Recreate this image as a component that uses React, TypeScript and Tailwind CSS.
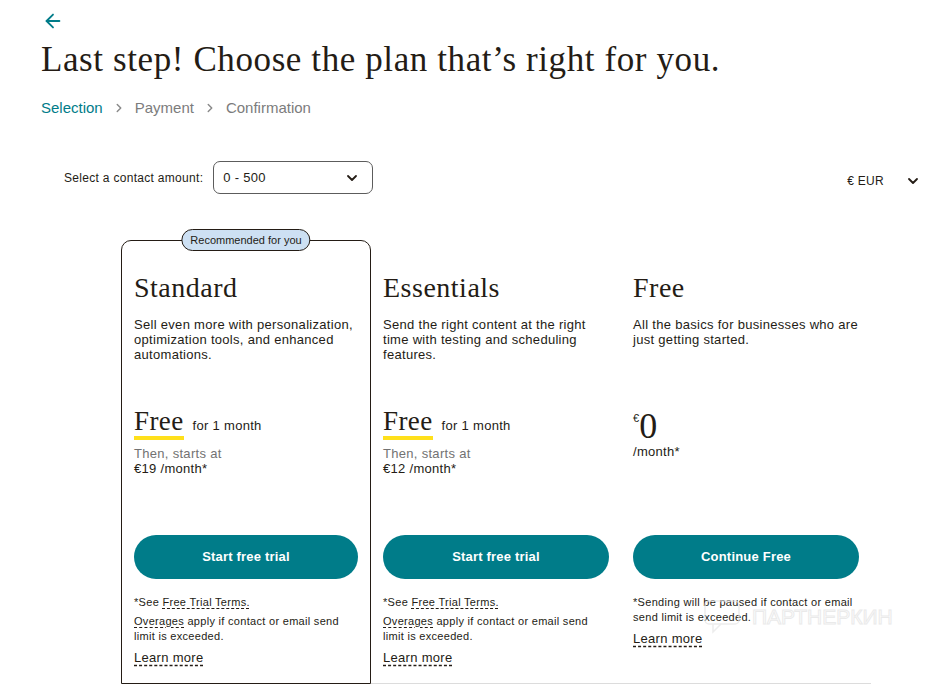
import React from "react";
import { ArrowLeft, ChevronDown, ChevronRight } from "lucide-react";

const sans = "font-['Liberation_Sans',Arial,sans-serif]";
const serif = "font-['Liberation_Serif','Times_New_Roman',serif]";

type Plan = {
  name: string;
  desc: string;
  trial: boolean;
  price: string;
  cta: string;
  recommended?: boolean;
};

const plans: Plan[] = [
  {
    name: "Standard",
    desc: "Sell even more with personalization, optimization tools, and enhanced automations.",
    trial: true,
    price: "€19",
    cta: "Start free trial",
    recommended: true,
  },
  {
    name: "Essentials",
    desc: "Send the right content at the right time with testing and scheduling features.",
    trial: true,
    price: "€12",
    cta: "Start free trial",
  },
  {
    name: "Free",
    desc: "All the basics for businesses who are just getting started.",
    trial: false,
    price: "0",
    cta: "Continue Free",
  },
];

function PlanColumn({ plan }: { plan: Plan }) {
  const box = plan.recommended
    ? "relative border border-[#241c15] rounded-t-[10px] px-[12px]"
    : "relative border-b border-[#dcdcdc] px-[12px] pt-[1px]";

  return (
    <div className={box}>
      {plan.recommended && (
        <div className="absolute left-1/2 -translate-x-1/2 -top-[12px] rounded-full border border-[#241c15] bg-[#cde0f3] px-[8px] h-[22px] flex items-center text-[11px] text-[#241c15] whitespace-nowrap">
          Recommended for you
        </div>
      )}

      <h2 className={`${serif} text-[28px] leading-[32px] tracking-[0.5px] text-[#241c15] pt-[31px]`}>{plan.name}</h2>
      <p className="mt-[13px] h-[90px] text-[13px] leading-[15px] tracking-[0.3px] text-[#241c15]">{plan.desc}</p>

      {plan.trial ? (
        <div className="h-[71px]">
          <div className="flex items-baseline gap-[9px]">
            <div className="flex flex-col">
              <span className={`${serif} text-[27px] leading-[28px] tracking-[0.4px] text-[#241c15]`}>Free</span>
              <span className="mt-[1px] h-[4px] bg-[#ffe01b]" />
            </div>
            <span className="text-[13px] tracking-[0.3px] text-[#241c15]">for 1 month</span>
          </div>
          <p className="mt-[6px] text-[13px] leading-[15px] tracking-[0.3px] text-[#727272]">Then, starts at</p>
          <p className="text-[13px] leading-[15px] tracking-[0.3px] text-[#241c15]">
            {plan.price} <span>/month*</span>
          </p>
        </div>
      ) : (
        <div className="h-[71px] pt-[2px]">
          <div className="flex items-start text-[#241c15]">
            <span className="text-[11px] leading-[11px] mt-[4px]">€</span>
            <span className={`${serif} text-[36px] leading-[34px]`}>{plan.price}</span>
          </div>
          <p className="mt-[1px] text-[13px] leading-[15px] tracking-[0.3px] text-[#241c15]">/month*</p>
        </div>
      )}

      <button className="mt-[57px] w-full h-[44px] rounded-full bg-[#007c89] text-white text-[13px] tracking-[0.2px] font-bold">
        {plan.cta}
      </button>

      {plan.trial ? (
        <div className="mt-[16px] text-[11px] leading-[15px] tracking-[0.3px] text-[#241c15]">
          <p className="mb-[4px]">
            *See <span className="underline decoration-dashed underline-offset-2">Free Trial Terms.</span>
          </p>
          <p>
            <span className="underline decoration-dashed underline-offset-2">Overages</span> apply if contact or email send limit is exceeded.
          </p>
        </div>
      ) : (
        <div className="mt-[16px] text-[11px] leading-[15px] tracking-[0.3px] text-[#241c15]">
          <p>*Sending will be paused if contact or email send limit is exceeded.</p>
        </div>
      )}

      <p className="mt-[5px] pb-[16px] text-[13px] leading-[18px] tracking-[0.3px] text-[#241c15]">
        <span className="underline decoration-dashed underline-offset-[3px]">Learn more</span>
      </p>
    </div>
  );
}

export default function App() {
  return (
    <div className={`${sans} relative min-h-[690px] bg-white pl-[41px] pr-[20px] pt-[10px] text-[#241c15] overflow-hidden`}>
      <ArrowLeft className="ml-[1px] text-[#007c89]" size={22} strokeWidth={2} />

      <h1 className={`${serif} mt-[8px] text-[35px] leading-[40px] tracking-[0.6px] text-[#241c15]`}>
        Last step! Choose the plan that’s right for you.
      </h1>

      <nav className="mt-[18px] flex items-center gap-[9px] text-[15px] leading-[20px]">
        <span className="text-[#007c89]">Selection</span>
        <ChevronRight size={14} strokeWidth={2.5} className="text-[#8a8a8a]" />
        <span className="text-[#7c7c7c]">Payment</span>
        <ChevronRight size={14} strokeWidth={2.5} className="text-[#8a8a8a]" />
        <span className="text-[#7c7c7c]">Confirmation</span>
      </nav>

      <div className="mt-[43px] flex items-center justify-between">
        <div className="ml-[23px] flex items-center gap-[10px]">
          <span className="text-[12px] tracking-[0.3px] text-[#241c15]">Select a contact amount:</span>
          <div className="w-[160px] h-[33px] rounded-[7px] border border-[#5c5c5c] flex items-center justify-between pl-[9px] pr-[12px]">
            <span className="text-[13px] tracking-[0.3px] text-[#241c15]">0 - 500</span>
            <ChevronDown size={16} strokeWidth={2.75} className="text-[#241c15]" />
          </div>
        </div>
        <div className="mt-[6px] flex items-center gap-[21px]">
          <span className="text-[12px] tracking-[0.3px] text-[#241c15]">€ EUR</span>
          <ChevronDown size={16} strokeWidth={2.75} className="text-[#241c15]" />
        </div>
      </div>

      <div className="mt-[46px] ml-[80px] grid grid-cols-[250px_250px_250px]">
        {plans.map((p) => (
          <PlanColumn key={p.name} plan={p} />
        ))}
      </div>

      {/* watermark */}
      <div className="pointer-events-none absolute left-[704px] top-[600px] flex items-center gap-[12px] opacity-70">
        <svg width="36" height="34" viewBox="0 0 36 34" fill="none" stroke="#e6e6e6" strokeWidth="1.5">
          <rect x="1" y="1" width="34" height="23" rx="4" />
          <path d="M9 24 L9 32 L17 24" />
        </svg>
        <span className="text-[21px] leading-[24px] text-transparent [-webkit-text-stroke:1px_#e2e2e2]">ПАРТНЕРКИН</span>
      </div>
    </div>
  );
}
